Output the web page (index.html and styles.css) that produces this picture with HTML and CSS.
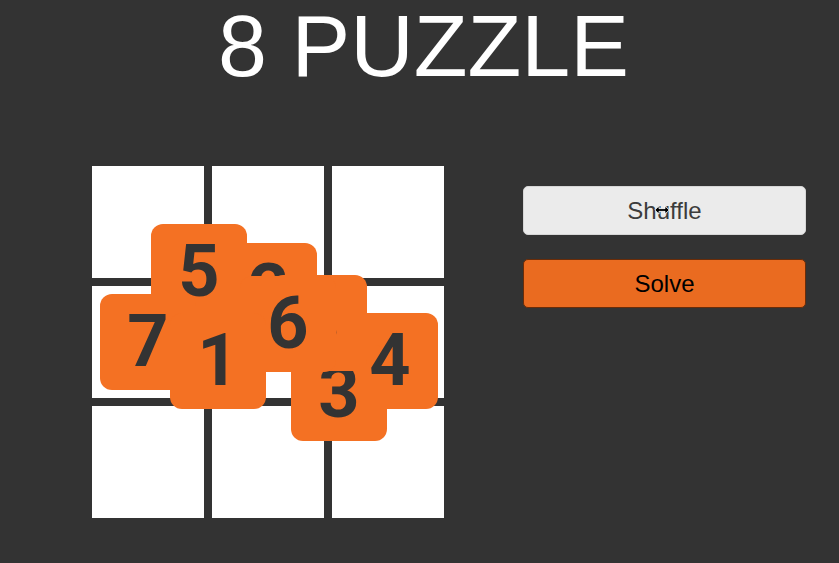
FILE: index.html
```html
<!DOCTYPE html>
<html>
<head>
<meta charset="utf-8">
<title>8 Puzzle</title>
<link rel="stylesheet" href="styles.css">
</head>
<body>
<h1 class="title">8 PUZZLE</h1>
<main class="stage">
  <div class="board">
    <div class="cell"></div><div class="cell"></div><div class="cell"></div>
    <div class="cell"></div><div class="cell"></div><div class="cell"></div>
    <div class="cell"></div><div class="cell"></div><div class="cell"></div>
    <div class="tile t4"><span class="num num-raised">4</span></div>
    <div class="tile t3"><span class="num">3</span></div>
    <div class="tile t2"><span class="num">2</span></div>
    <div class="tile t8"><span class="num">8</span></div>
    <div class="tile t5"><span class="num">5</span></div>
    <div class="tile t7"><span class="num">7</span></div>
    <div class="tile t6"><span class="num">6</span></div>
    <div class="tile t1"><span class="num">1</span></div>
  </div>
  <div class="controls">
    <button class="btn btn-shuffle">Shuffle
      <svg class="cursor" width="16" height="10" viewBox="0 0 16 10">
        <path d="M0.8 5 L5 0.8 L5 3.6 L11 3.6 L11 0.8 L15.2 5 L11 9.2 L11 6.4 L5 6.4 L5 9.2 Z" fill="#000" stroke="#fff" stroke-width="0.9" stroke-linejoin="miter"/>
      </svg>
    </button>
    <button class="btn btn-solve">Solve</button>
  </div>
</main>
</body>
</html>
```
FILE: styles.css
```css
html, body {
  margin: 0;
  padding: 0;
  background: #333333;
  height: 100%;
  overflow: hidden;
}

.title {
  margin: 0;
  padding: 0 0 0 8px;
  font-family: "Liberation Sans", Arial, sans-serif;
  font-weight: normal;
  font-size: 88px;
  line-height: 91px;
  color: #ffffff;
  text-align: center;
}

.stage {
  display: flex;
  align-items: flex-start;
  padding-left: 92px;
  margin-top: 75px;
  gap: 79px;
}

.board {
  position: relative;
  display: grid;
  grid-template-columns: repeat(3, 112px);
  grid-template-rows: repeat(3, 112px);
  gap: 8px;
}

.cell {
  background: #ffffff;
}

.tile {
  position: absolute;
  width: 96px;
  height: 96px;
  border-radius: 12px;
  background: #f47123;
  text-align: center;
  font-family: Roboto, "Liberation Sans", sans-serif;
  font-weight: bold;
  font-size: 72px;
  line-height: 96px;
  color: #333333;
}

.num-raised {
  position: relative;
  z-index: 1;
}

.t4 { left: 250px; top: 147px; }
.t3 { left: 199px; top: 179px; }
.t2 { left: 129px; top: 77px; }
.t8 { left: 179px; top: 109px; }
.t5 { left: 59px;  top: 58px; }
.t7 { left: 8px;   top: 128px; }
.t6 { left: 148px; top: 110px; }
.t1 { left: 78px;  top: 147px; }

.controls {
  display: flex;
  flex-direction: column;
  gap: 24px;
  margin-top: 20px;
}

.btn {
  position: relative;
  width: 283px;
  height: 49px;
  border-radius: 5px;
  font-family: "Liberation Sans", Arial, sans-serif;
  font-size: 24px;
  padding: 0;
  cursor: default;
}

.btn-shuffle {
  background: #ebebeb;
  border: 1px solid #d6d6d6;
  color: #3c3c3c;
}

.btn-solve {
  background: #ea6b20;
  border: 1px solid #6a2c08;
  color: #000000;
}

.cursor {
  position: absolute;
  left: 130px;
  top: 18px;
}
```
